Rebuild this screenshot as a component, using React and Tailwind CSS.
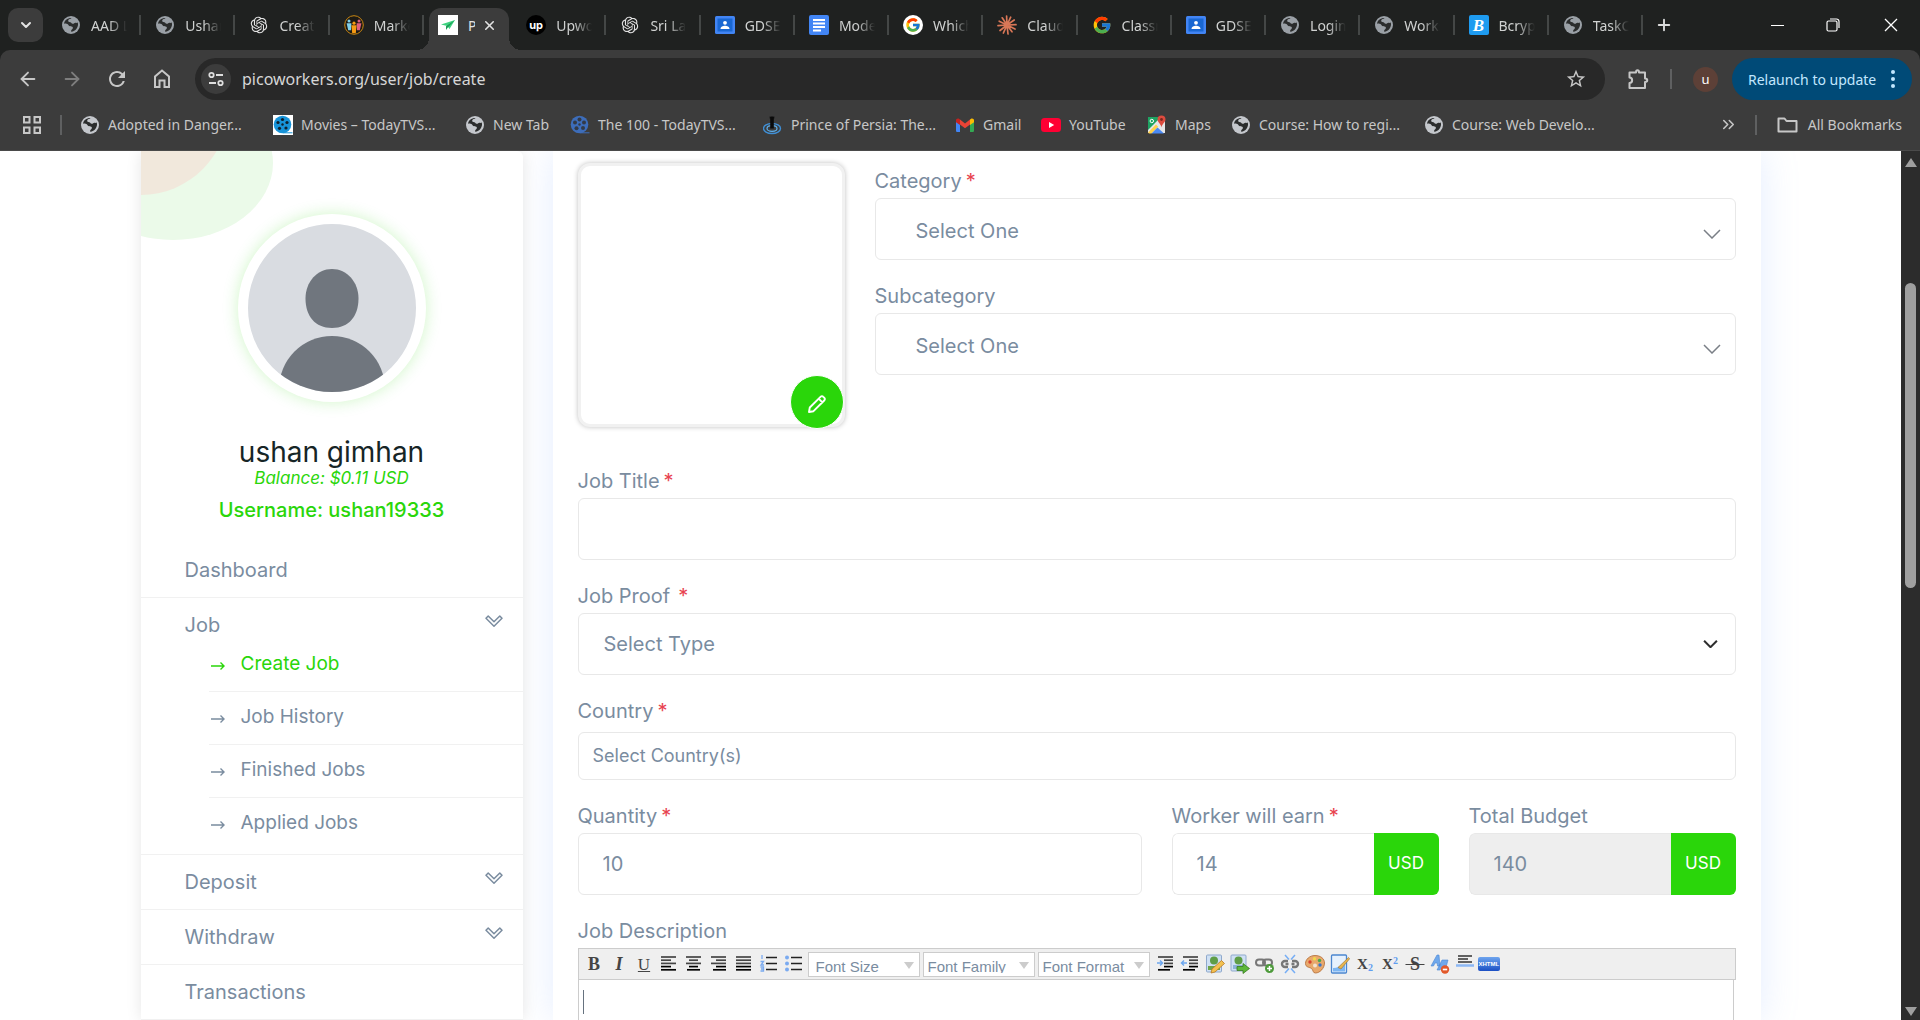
import React from "react";
import { ArrowLeft, ArrowRight, ChevronDown, ChevronsRight, X, Plus } from "lucide-react";
import { FcGoogle } from "react-icons/fc";
import { RiOpenaiFill } from "react-icons/ri";
import { MdStarBorder, MdRefresh } from "react-icons/md";

/* ---------- favicons ---------- */

function Globe({ className = "text-[#9aa0a6]" }) {
  return (
    <svg viewBox="0 0 20 20" className={`size-5 shrink-0 ${className}`} aria-hidden="true">
      <circle cx="10" cy="10" r="9" fill="currentColor" />
      <path
        d="M10.6 3.1c-1.1 1.2-3 .9-3.4 2.400-.3 1.200.9 1.700 2.100 1.700 1.200 0 1 1.400 2.300 1.600 1.500.2 1.800-1.300 3.100-1 .9.2 1.400.1 2.100-.3.6 2.200.1 4.500-1.300 6.200-1.300 1.700-3 2.900-5.300 3-.2-1.100.1-1.900 1-2.500 1-.7.9-1.700.1-2.400-1-.9-2-.4-3-.9-.9-.5-.8-1.500-1.900-1.900-1.200-.4-2.300-.1-3.300-.5C3.300 5.800 6 3.100 10.600 3.100Z"
        fill="#2b2d2d"
      />
    </svg>
  );
}

function People() {
  return (
    <svg viewBox="0 0 20 20" className="size-5 shrink-0" aria-hidden="true">
      <circle cx="10" cy="10" r="9.300" fill="#1d1a14" stroke="#c98712" strokeWidth="1" />
      <circle cx="5" cy="6" r="1.500" fill="#7fd0ea" />
      <path d="M2.600 8.200h4.800l-.4 7H4.200Z" fill="#7fd0ea" />
      <circle cx="15" cy="6" r="1.500" fill="#e0607e" />
      <path d="M12.600 8.200h4.800l-1.600 7H13Z" fill="#e0607e" />
      <circle cx="10" cy="8.200" r="1.600" fill="#f59a13" />
      <path d="M7.400 10.200h5.200l-.8 8H8.200Z" fill="#f59a13" />
    </svg>
  );
}

function Plane() {
  return (
    <svg viewBox="0 0 20 20" className="size-5 shrink-0" aria-hidden="true">
      <rect width="20" height="20" fill="#fff" />
      <path d="M3 9.500 17 5l-5.500 9-2.200-3Z" fill="#3ed27f" />
      <path d="M17 5 8 11.200V15l2-2.800Z" fill="#1a9c56" />
    </svg>
  );
}

function Upwork() {
  return (
    <span className="flex size-5 shrink-0 items-center justify-center rounded-full bg-black font-['Inter'] text-[11px] font-bold leading-none text-white">
      up
    </span>
  );
}

function Classroom() {
  return (
    <svg viewBox="0 0 20 20" className="size-5 shrink-0" aria-hidden="true">
      <rect y="1" width="20" height="18" rx="1.500" fill="#4285f4" />
      <rect x="2.500" y="3.500" width="15" height="13" fill="#1967d2" />
      <circle cx="10" cy="7.800" r="1.900" fill="#fff" />
      <path d="M5.500 14c0-2.400 2.400-3.300 4.500-3.300s4.500.9 4.500 3.300Z" fill="#fff" />
    </svg>
  );
}

function Docs() {
  return (
    <svg viewBox="0 0 20 20" className="size-5 shrink-0" aria-hidden="true">
      <rect width="20" height="20" rx="2" fill="#4285f4" />
      <path d="M4 5h12M4 8.500h12M4 12h12M4 15.500h8" stroke="#fff" strokeWidth="2" />
    </svg>
  );
}

function GoogleCircle() {
  return (
    <span className="flex size-5 shrink-0 items-center justify-center rounded-full bg-white">
      <FcGoogle className="size-4" />
    </span>
  );
}

function Burst() {
  return (
    <svg viewBox="0 0 20 20" className="size-5 shrink-0" aria-hidden="true" stroke="#d97757" strokeWidth="1.700" strokeLinecap="round">
      <path d="M10 10 9.600 1M10 10l3.700-7.800M10 10l7.200-5M10 10l9-.3M10 10l8 4M10 10l5 6.800M10 10l1 9M10 10l-3.600 8M10 10l-7 5.500M10 10l-9 .6M10 10 2.200 6.200M10 10 5.200 2.800" />
    </svg>
  );
}

function Bcrypt() {
  return (
    <span className="flex size-5 shrink-0 items-center justify-center rounded-[2px] bg-[#1e9bf0] font-['Liberation_Serif'] text-[17px] font-bold italic leading-none text-white">
      B
    </span>
  );
}

function Reel({ boxed }) {
  const c = boxed ? "#1793d8" : "#3d6dba";
  const hole = boxed ? "#10202c" : "#333a46";
  return (
    <svg viewBox="0 0 20 20" className="size-5 shrink-0" aria-hidden="true">
      {boxed && <rect width="20" height="20" fill="#fff" />}
      <circle cx="9.500" cy="9.500" r="8.800" fill={c} />
      <path d="M10 17.300h9.500v1H10Z" fill={c} />
      {[
        [9.500, 4.500],
        [14, 7.500],
        [13, 13],
        [6.500, 13.300],
        [5, 7.500],
      ].map(([x, y]) => (
        <circle key={x} cx={x} cy={y} r={boxed ? 1.6 : 2} fill={hole} />
      ))}
      <circle cx="9.500" cy="9.500" r="1.200" fill={hole} />
    </svg>
  );
}

function Tower() {
  return (
    <svg viewBox="0 0 20 20" className="size-5 shrink-0" aria-hidden="true" fill="none">
      <ellipse cx="9" cy="13.500" rx="8.500" ry="5" stroke="#3f8fd6" strokeWidth="1.400" />
      <ellipse cx="9" cy="13.500" rx="5" ry="2.800" stroke="#5fb0ee" strokeWidth="1.200" />
      <path d="M7.200 2v11.500h3.600V2Z" fill="#0a0a0a" />
      <path d="M7.200 1.500v2M9 1v2M10.800 1.500v2" stroke="#0a0a0a" />
    </svg>
  );
}

function Gmail() {
  return (
    <svg viewBox="0 0 20 20" className="size-5 shrink-0" aria-hidden="true">
      <path d="M1 5v10.700c0 .7.6 1.300 1.300 1.300H5V8.500Z" fill="#4285f4" />
      <path d="M19 5v10.700c0 .7-.6 1.300-1.300 1.300H15V8.500Z" fill="#34a853" />
      <path d="M5 4.500 10 8.400l5-3.900v5L10 13.300 5 9.500Z" fill="#ea4335" />
      <path d="M1 5.200v2L5 10V4.500l-.8-.6C2.900 2.900 1 3.700 1 5.200Z" fill="#c5221f" />
      <path d="M19 5.200v2L15 10V4.500l.8-.6c1.300-1 3.200-.2 3.200 1.300Z" fill="#fbbc04" />
    </svg>
  );
}

function YouTube() {
  return (
    <svg viewBox="0 0 20 20" className="size-5 shrink-0" aria-hidden="true">
      <rect y="3" width="20" height="14" rx="3.500" fill="#ff0033" />
      <path d="m8 7 5.200 3L8 13Z" fill="#fff" />
    </svg>
  );
}

function MapsIcon() {
  return (
    <svg viewBox="0 0 20 20" className="size-5 shrink-0" aria-hidden="true">
      <path d="M1 2h13l4 4v12H1Z" fill="#e6e6e6" />
      <path d="M1 2h13L1 15Z" fill="#1ea362" />
      <path d="m1 17.500 8-8 2.200 2.200L4.500 18.500H2Z" fill="#ffd14a" />
      <path d="m4.500 18.500 6-6 6.500 6Z" fill="#4a89f3" />
      <circle cx="4.800" cy="6" r="1.700" fill="none" stroke="#fff" strokeWidth="1" />
      <path d="M14.500.5a4 4 0 0 1 4 4c0 2.700-3.300 4-4 8-.7-4-4-5.300-4-8a4 4 0 0 1 4-4Z" fill="#dd4b3e" />
      <circle cx="14.500" cy="4.500" r="1.400" fill="#7c2720" />
    </svg>
  );
}

const OpenAI = () => <RiOpenaiFill className="size-5 shrink-0 text-[#e3e3e3]" />;
const Google = () => <FcGoogle className="size-5 shrink-0" />;
const BrightGlobe = () => <Globe className="text-[#c4c7cc]" />;

/* ---------- browser chrome ---------- */

const tabs = [
  ["AAD Lab", Globe],
  ["Ushan", Globe],
  ["Create", OpenAI],
  ["Market", People],
  ["Pico", Plane, true],
  ["Upwork", Upwork],
  ["Sri Lanka", OpenAI],
  ["GDSE", Classroom],
  ["Model", Docs],
  ["Which", GoogleCircle],
  ["Claude", Burst],
  ["Classr", Google],
  ["GDSE", Classroom],
  ["Login", Globe],
  ["Works", Globe],
  ["Bcrypt", Bcrypt],
  ["TaskC", Globe],
];

function Tab({ label, Icon, active }) {
  if (active) {
    return (
      <div className="h-full w-0 min-w-0 flex-1 pl-[5px] pr-[3px] pt-2">
        <div className="relative flex h-[42px] items-center rounded-t-xl bg-[#3c3c3c] pb-2 pl-[9px] pr-3">
          <span className="absolute -left-3 bottom-0 size-3 bg-[radial-gradient(circle_at_0_0,transparent_12px,#3c3c3c_12px)]" />
          <span className="absolute -right-3 bottom-0 size-3 bg-[radial-gradient(circle_at_100%_0,transparent_12px,#3c3c3c_12px)]" />
          <Icon />
          <span className="ml-[10px] w-[7px] overflow-hidden text-[#e3e3e3]">{label}</span>
          <button aria-label="Close tab" className="ml-auto text-[#e3e3e3]">
            <X className="size-[15px]" strokeWidth={2.5} />
          </button>
        </div>
      </div>
    );
  }
  return (
    <button className="flex w-0 min-w-0 flex-1 items-center pl-[14px] text-left text-[#d0d2d1]">
      <Icon />
      <span className="ml-[10px] w-9 overflow-hidden whitespace-nowrap [mask-image:linear-gradient(to_right,black_50%,transparent)]">
        {label}
      </span>
      <span className="ml-auto h-5 w-[2px] bg-[#444746]" />
    </button>
  );
}

function TabStrip() {
  return (
    <div className="flex h-[50px] items-center bg-[#1f2120] pl-2 font-['Noto_Sans',sans-serif] text-[14px]">
      <button aria-label="Search tabs" className="flex h-[34px] w-[35px] items-center justify-center rounded-[10px] bg-[#3c3c3c] text-[#e3e3e3]">
        <ChevronDown className="size-4" strokeWidth={3} />
      </button>
      <div className="ml-1 flex h-full max-w-[1596px] flex-1 items-center">
        {tabs.map(([label, Icon, active], i) => (
          <Tab key={i} label={label} Icon={Icon} active={active} />
        ))}
      </div>
      <button aria-label="New tab" className="ml-3 text-[#dcdcdc]">
        <Plus className="size-[18px]" strokeWidth={2.500} />
      </button>
      <div className="ml-auto flex items-center text-white">
        <button aria-label="Minimize" className="flex h-10 w-14 items-center justify-center">
          <span className="h-px w-[13px] bg-white" />
        </button>
        <button aria-label="Restore" className="flex h-10 w-14 items-center justify-center">
          <svg viewBox="0 0 14 14" className="size-[14px]" fill="none" stroke="currentColor" strokeWidth="1.200">
            <rect x="1" y="3" width="10" height="10" rx="1.500" />
            <path d="M4 1h6.500A2.500 2.500 0 0 1 13 3.500V10" />
          </svg>
        </button>
        <button aria-label="Close" className="flex h-10 w-[59px] items-center justify-center">
          <svg viewBox="0 0 14 14" className="size-[14px]" stroke="currentColor" strokeWidth="1.300">
            <path d="m1 1 12 12M13 1 1 13" />
          </svg>
        </button>
      </div>
    </div>
  );
}

function AddressBar() {
  return (
    <div className="flex h-[58px] items-center rounded-t-[10px] bg-[#3c3c3c] pl-[17px] pr-2 text-[#c7c7c7]">
      <button aria-label="Back"><ArrowLeft className="size-[22px]" /></button>
      <button aria-label="Forward" className="ml-[22px] text-[#7e7e7e]"><ArrowRight className="size-[22px]" /></button>
      <button aria-label="Reload" className="ml-[22px]"><MdRefresh className="size-6" /></button>
      <button aria-label="Home" className="ml-[22px]">
        <svg viewBox="0 0 22 22" className="size-[22px]" fill="none" stroke="currentColor" strokeWidth="2">
          <path d="M4 19V8.500l7-6 7 6V19h-4.500v-6.500h-5V19Z" />
        </svg>
      </button>
      <div className="ml-[22px] flex h-[42px] flex-1 items-center rounded-full bg-[#282828] pl-[6px] pr-[18px]">
        <button aria-label="View site information" className="flex size-[30px] items-center justify-center rounded-full bg-[#3c3c3c] text-[#dedede]">
          <svg viewBox="0 0 18 18" className="size-[18px]" fill="none" stroke="currentColor" strokeWidth="1.800">
            <circle cx="4.500" cy="5" r="2.200" />
            <path d="M9 5h7M2 13h7" />
            <circle cx="13.500" cy="13" r="2.200" />
          </svg>
        </button>
        <label htmlFor="url" className="sr-only">Address</label>
        <input
          id="url"
          className="ml-[11px] flex-1 bg-transparent font-['Noto_Sans',sans-serif] text-[16px] leading-6 text-[#d6d6d6] outline-none"
          defaultValue="picoworkers.org/user/job/create"
        />
        <button aria-label="Bookmark this tab"><MdStarBorder className="size-[22px]" /></button>
      </div>
      <button aria-label="Extensions" className="ml-[22px]">
        <svg viewBox="0 0 22 22" className="size-[22px]" fill="none" stroke="currentColor" strokeWidth="2" strokeLinejoin="round">
          <path d="M2.500 4.500H9c0-3 3-3 3 0h6v6c3 0 3 3.500 0 3.500v6H2.500v-5c3.500 0 3.500-5.500 0-5.500Z" />
        </svg>
      </button>
      <span className="ml-[21px] h-5 w-[2px] bg-[#5f6061]" />
      <button aria-label="Profile" className="ml-[21px] flex size-[25px] items-center justify-center rounded-full bg-[#5d4037] font-['Noto_Sans',sans-serif] text-[13px] leading-none text-white">
        u
      </button>
      <button className="ml-[14px] flex h-[42px] w-[180px] items-center justify-between rounded-full bg-[#004a77] pl-4 pr-[17px] font-['Noto_Sans',sans-serif] text-[14px] text-[#c2e7ff]">
        <span className="whitespace-nowrap">Relaunch to update</span>
        <svg viewBox="0 0 4 18" className="h-[18px] w-1" fill="currentColor">
          <circle cx="2" cy="2" r="2" />
          <circle cx="2" cy="9" r="2" />
          <circle cx="2" cy="16" r="2" />
        </svg>
      </button>
    </div>
  );
}

const BoxedReel = () => <Reel boxed />;

const bookmarks = [
  ["Adopted in Danger...", BrightGlobe, "w-[193px]"],
  ["Movies – TodayTVS...", BoxedReel, "w-[192px]"],
  ["New Tab", BrightGlobe, "w-[105px]"],
  ["The 100 - TodayTVS...", Reel, "w-[193px]"],
  ["Prince of Persia: The...", Tower, "w-[192px]"],
  ["Gmail", Gmail, "w-[86px]"],
  ["YouTube", YouTube, "w-[106px]"],
  ["Maps", MapsIcon, "w-[84px]"],
  ["Course: How to regi...", BrightGlobe, "w-[193px]"],
  ["Course: Web Develo...", BrightGlobe, "w-[193px]"],
];

function BookmarksBar() {
  return (
    <nav className="flex h-[43px] items-center border-b border-[#4a4a4a] bg-[#3c3c3c] pb-[9px] pl-[23px] pr-[18px] font-['Noto_Sans',sans-serif] text-[14px] text-[#c7c7c7]">
      <button aria-label="Apps">
        <svg viewBox="0 0 18 18" className="size-[18px]" fill="none" stroke="currentColor" strokeWidth="2">
          <path d="M1 1h5.500v5.500H1ZM11.500 1H17v5.500h-5.500ZM1 11.500h5.500V17H1ZM11.500 11.500H17V17h-5.500Z" />
        </svg>
      </button>
      <span className="ml-[19px] mr-[18px] h-5 w-[2px] bg-[#5f6061]" />
      {bookmarks.map(([label, Icon, width]) => (
        <a key={label} href="#" className={`flex items-center gap-2 whitespace-nowrap ${width}`}>
          <Icon />
          {label}
        </a>
      ))}
      <button aria-label="More bookmarks" className="ml-auto"><ChevronsRight className="size-[19px]" /></button>
      <span className="ml-[17px] mr-5 h-5 w-[2px] bg-[#5f6061]" />
      <button className="flex items-center gap-[10px] whitespace-nowrap">
        <svg viewBox="0 0 21 18" className="h-[18px] w-[21px]" fill="none" stroke="currentColor" strokeWidth="2" strokeLinejoin="round">
          <path d="M1.500 2.500h6l2 2.500h10v10.500h-18Z" />
        </svg>
        All Bookmarks
      </button>
    </nav>
  );
}

/* ---------- sidebar ---------- */

function OutlineChevron() {
  return (
    <svg viewBox="0 0 18 12" className="mb-2 h-3 w-[18px]" fill="none" stroke="currentColor" strokeWidth="1.500" strokeLinejoin="round" aria-hidden="true">
      <path d="M9 11.200 1 3.200 3.200 1 9 6.800 14.800 1 17 3.200Z" />
    </svg>
  );
}

function SmallArrow() {
  return (
    <svg viewBox="0 0 14 10" className="mt-[3px] h-[10px] w-[14px]" fill="none" stroke="currentColor" strokeWidth="1.400" aria-hidden="true">
      <path d="M0 5h13M9.500 1.500 13 5 9.500 8.500" />
    </svg>
  );
}

function MenuRow({ label, expandable }) {
  return (
    <li className="border-b border-[#f1f1f1]">
      <a href="#" className="flex h-[54px] items-center justify-between pl-11 pr-5">
        {label}
        {expandable && <OutlineChevron />}
      </a>
    </li>
  );
}

const jobLinks = ["Create Job", "Job History", "Finished Jobs", "Applied Jobs"];

function Sidebar() {
  return (
    <aside className="relative w-[382px] shrink-0 self-stretch rounded-t-md bg-white shadow-[0_0_16px_rgba(0,0,0,0.1)]">
      <svg viewBox="0 0 140 90" className="absolute left-0 top-0 h-[90px] w-[140px]" aria-hidden="true">
        <ellipse cx="32" cy="12" rx="100" ry="77" fill="#ebfae9" />
        <ellipse cx="0" cy="-46" rx="88" ry="90" fill="#f1e8dc" />
      </svg>
      <div className="relative flex flex-col items-center pt-[63px]">
        <div className="size-[188px] overflow-hidden rounded-full border-[10px] border-white bg-[#d9dce1] shadow-[0_0_16px_rgba(42,214,10,0.22)]">
          <svg viewBox="0 0 168 168" className="size-full" fill="#70767e" role="img" aria-label="Profile picture">
            <path d="M84 45c15 0 26.500 13 26.500 29.500C110.500 92 101 104 84 104s-26.500-12-26.500-29.500C57.500 58 69 45 84 45Z" />
            <circle cx="84" cy="165" r="53" />
          </svg>
        </div>
        <h5 className="mt-8 font-['Inter',sans-serif] text-[28px] leading-9 text-[#162526]">ushan gimhan</h5>
        <span className="font-['Inter',sans-serif] text-[17px] italic leading-4 text-[#2ad60a]">Balance: $0.11 USD</span>
        <h6 className="mt-2 font-['Inter',sans-serif] text-[20px] font-medium leading-8 text-[#2ad60a]">Username: ushan19333</h6>
      </div>
      <ul className="mt-[17px] text-[20px]">
        <MenuRow label="Dashboard" />
        <li className="border-b border-[#f1f1f1] pb-1">
          <a href="#" className="flex h-[41px] items-center justify-between pl-11 pr-5 pt-[13px] leading-7">
            Job
            <OutlineChevron />
          </a>
          <ul className="ml-[68px] divide-y divide-[#f1f1f1] text-[19px]">
            {jobLinks.map((label, i) => (
              <li key={label}>
                <a href="#" className={`flex h-[52px] items-center gap-4 pb-px pl-[2px] ${i === 0 ? "text-[#2ad60a]" : ""}`}>
                  <SmallArrow />
                  {label}
                </a>
              </li>
            ))}
          </ul>
        </li>
        <MenuRow label="Deposit" expandable />
        <MenuRow label="Withdraw" expandable />
        <MenuRow label="Transactions" />
      </ul>
    </aside>
  );
}

/* ---------- job form ---------- */

function FieldLabel({ htmlFor, children, required, spaced }) {
  return (
    <label htmlFor={htmlFor} className="mb-[2px] block text-[20px] leading-[30px]">
      {children}
      {required && <span className={`text-[#e8434f] ${spaced ? "ml-2" : "ml-1"}`}>*</span>}
    </label>
  );
}

const box = "block h-[62px] w-full appearance-none rounded-md border border-[#e8e8e8] bg-white text-[20px] text-[#7a8c9f] outline-none";

function SelectField({ id, label, option, thin, required, spaced }) {
  return (
    <div>
      <FieldLabel htmlFor={id} required={required} spaced={spaced}>{label}</FieldLabel>
      <div className="relative">
        <select id={id} className={`${box} ${thin ? "pl-10 pt-1" : "pl-[25px]"}`}>
          <option>{option}</option>
        </select>
        <svg
          viewBox="0 0 18 10"
          className={`pointer-events-none absolute top-1/2 ${thin ? "right-[15px] h-[10px] w-[18px]" : "right-[18px] h-2 w-[15px] -translate-y-1"}`}
          fill="none"
          stroke={thin ? "#7a7f86" : "#2d2d2d"}
          strokeWidth={thin ? 1.5 : 2.5}
          aria-hidden="true"
        >
          <path d="m1 1 8 8 8-8" />
        </svg>
      </div>
    </div>
  );
}

function MoneyField({ id, label, value, required, disabled }) {
  return (
    <div className="min-w-0">
      <FieldLabel htmlFor={id} required={required}>{label}</FieldLabel>
      <div className="flex h-[62px] overflow-hidden rounded-md">
        <input
          id={id}
          defaultValue={value}
          readOnly={disabled}
          className={`min-w-0 flex-1 rounded-l-md border border-r-0 border-[#e8e8e8] pl-6 text-[20px] outline-none ${disabled ? "bg-[#eeeeee]" : "bg-white"}`}
        />
        <span className="flex w-[65px] items-center justify-center bg-[#2ad60a] text-[17px] text-white">USD</span>
      </div>
    </div>
  );
}

/* ---------- rich text toolbar ---------- */

function Lines({ rows, children }) {
  return (
    <>
      {rows.map(([a, b], i) => (
        <path key={i} d={`M${a} ${3 + i * 3.2}H${b}`} stroke={i > 2 ? "#000" : "#444"} strokeWidth="1.700" />
      ))}
      {children}
    </>
  );
}

const leftTools = [
  ["Bold", <b className="font-['Liberation_Serif'] text-[18px] leading-none text-[#444]">B</b>],
  ["Italic", <i className="font-['Liberation_Serif'] text-[18px] font-bold leading-none text-[#444]">I</i>],
  ["Underline", <span className="font-['Liberation_Serif'] text-[17px] leading-none text-[#444] underline">U</span>],
  ["Left Align", <Lines rows={[[2, 17], [2, 12], [2, 17], [2, 12], [2, 17]]} />],
  ["Center Align", <Lines rows={[[2, 17], [5, 14], [2, 17], [5, 14], [3, 16]]} />],
  ["Right Align", <Lines rows={[[2, 17], [7, 17], [2, 17], [7, 17], [4, 17]]} />],
  ["Justify Align", <Lines rows={[[2, 17], [2, 17], [2, 17], [2, 17], [2, 17]]} />],
  [
    "Ordered List",
    <>
      <path d="M7 3.500h11M7 9.500h11M7 15.500h11" stroke="#222" strokeWidth="1.500" />
      <path d="M3 1v4M1.500 7.500h3L2 11h3M1.500 13h3v4h-3M2 15h2.500" stroke="#7aaaf0" strokeWidth="1.300" fill="none" />
    </>,
  ],
  [
    "Unordered List",
    <>
      <path d="M7 3.500h11M7 9.500h11M7 15.500h11" stroke="#222" strokeWidth="1.500" />
      <g fill="#7aaaf0">
        <circle cx="3" cy="3.500" r="2" />
        <circle cx="3" cy="9.500" r="2" />
        <circle cx="3" cy="15.500" r="2" />
      </g>
    </>,
  ],
];

const rightTools = [
  [
    "Indent",
    <Lines rows={[[3, 18], [9, 18], [9, 18], [9, 18], [3, 15]]}>
      <path d="M2 9h5M5 6.500 7.500 9 5 11.500" stroke="#6da7ee" strokeWidth="1.500" fill="none" />
    </Lines>,
  ],
  [
    "Remove Indent",
    <Lines rows={[[3, 18], [9, 18], [9, 18], [9, 18], [3, 15]]}>
      <path d="M2 9h5M4 6.500 1.500 9 4 11.500" stroke="#6da7ee" strokeWidth="1.500" fill="none" />
    </Lines>,
  ],
  [
    "Add Image",
    <>
      <rect x="1.500" y="1" width="15" height="17" rx="1" fill="#cfe0f4" stroke="#8fa9cc" />
      <path d="M3 12h12v4H3Z" fill="#6fa54a" />
      <circle cx="9" cy="6.500" r="4" fill="#5f9e47" />
      <path d="m6 19 1-4 9.500-8.500 3 3L10 18Z" fill="#f4c14f" stroke="#b77a25" strokeWidth=".8" />
    </>,
  ],
  [
    "Upload Image",
    <>
      <rect x="1" y="1" width="15" height="16" rx="1" fill="#cfe0f4" stroke="#8fa9cc" />
      <path d="M3 11h11v4H3Z" fill="#8db4d8" />
      <circle cx="8.500" cy="6.500" r="4" fill="#5f9e47" />
      <path d="M7 12.500h6V9.500l6.500 5-6.500 5v-3H7Z" fill="#5db83a" stroke="#377a20" strokeWidth=".8" />
    </>,
  ],
  [
    "Add Link",
    <>
      <g fill="none" stroke="#777" strokeWidth="2">
        <rect x="1" y="5.500" width="9" height="6" rx="3" />
        <rect x="8" y="5.500" width="9" height="6" rx="3" />
      </g>
      <circle cx="14.500" cy="14.500" r="4.500" fill="#4d9a3b" />
      <path d="M14.500 12v5M12 14.500h5" stroke="#fff" strokeWidth="1.500" />
    </>,
  ],
  [
    "Remove Link",
    <>
      <g fill="none" stroke="#777" strokeWidth="2.400">
        <path d="M8 7H5a3 3 0 0 0 0 6h3M12 7h3a3 3 0 0 1 0 6h-3M5.500 10h3M11.500 10h3" />
      </g>
      <path d="m5 1 4 4.500M15 1l-4 4.500M5 19l4-4.500M15 19l-4-4.500" stroke="#76aef5" strokeWidth="1.500" />
    </>,
  ],
  [
    "Change Color",
    <>
      <path d="M10 1.500c5.500 0 9.500 3 9.500 7.500 0 5-4.500 10-9 10-3 0-2-3-4-4.500S.5 13.500.5 9.500 4.500 1.500 10 1.500Z" fill="#e8a96c" stroke="#b06a34" strokeWidth=".8" />
      <circle cx="5" cy="8" r="1.700" fill="#d9432f" />
      <circle cx="9.500" cy="4.800" r="1.700" fill="#f1d84a" />
      <circle cx="14.500" cy="6.500" r="1.700" fill="#4da84b" />
      <circle cx="15" cy="11" r="1.700" fill="#3b74c9" />
      <circle cx="10" cy="11.500" r="2" fill="#f4e2cf" />
    </>,
  ],
  [
    "Background Color",
    <>
      <rect x="1.500" y="1" width="15" height="18" rx="1" fill="#e6f1fd" stroke="#4b86cf" strokeWidth="1.300" />
      <path d="M3 17.500V14c4 0 8-2 12-6v9.500Z" fill="#7cb6f3" />
      <path d="m8 13.500 10.500-10 1.200 1.200L11 15Z" fill="#e7b54d" stroke="#9b7130" strokeWidth=".6" />
    </>,
  ],
  ["Subscript", <span className="font-['Liberation_Serif'] text-[15px] font-bold leading-none text-[#444]">X<sub className="text-[10px] text-[#5f9ef0]">2</sub></span>],
  ["Superscript", <span className="font-['Liberation_Serif'] text-[15px] font-bold leading-none text-[#444]">X<sup className="text-[10px] text-[#5f9ef0]">2</sup></span>],
  ["Strike Through", <span className="font-['Liberation_Serif'] text-[18px] font-bold leading-none text-[#444] line-through">&nbsp;S&nbsp;</span>],
  [
    "Remove Formatting",
    <>
      <path d="m1 12 6-11h2l1 11H7.500l-.3-3H5l-1.500 3ZM7 16l5-10h6l-3 11h-3l1-4h-1.500L10 16Z" fill="#6fa8ec" stroke="#4a86d4" strokeWidth=".6" />
      <circle cx="15" cy="15.500" r="4.200" fill="#e2592b" />
      <path d="M12.800 15.500h4.400" stroke="#fff" strokeWidth="1.700" />
    </>,
  ],
  [
    "Horizontal Rule",
    <>
      <path d="M3 2h14M3 5h10M3 8h14" stroke="#333" strokeWidth="1.500" />
      <path d="M1 11.500h18" stroke="#8db8f5" strokeWidth="2.500" />
    </>,
  ],
];

function Tool({ name, children }) {
  const isText = children.type === "b" || children.type === "i" || children.type === "span";
  return (
    <button type="button" aria-label={name} className="flex h-6 w-[25px] shrink-0 items-center justify-center whitespace-nowrap">
      {isText ? children : <svg viewBox="0 0 20 20" className="size-5">{children}</svg>}
    </button>
  );
}

function ToolSelect({ label, wide }) {
  return (
    <div className="relative mr-[3px] h-[25px] w-28 shrink-0 border border-[#ccc] bg-white">
      <div className="h-5 overflow-hidden">
        <select aria-label={label} className={`h-[30px] w-full appearance-none bg-transparent font-['Liberation_Sans',sans-serif] text-[15px] outline-none ${wide ? "pl-[7px]" : "pl-1"}`}>
          <option>{label}</option>
        </select>
      </div>
      <span className="pointer-events-none absolute right-[5px] top-[9px] border-x-[5px] border-t-[7px] border-x-transparent border-t-[#ccc]" />
    </div>
  );
}

function Editor() {
  return (
    <div className="flex flex-1 flex-col">
      <FieldLabel htmlFor="description">Job Description</FieldLabel>
      <div className="flex h-8 items-center overflow-hidden border border-[#ccc] bg-[#efefef] pl-[3px]">
        {leftTools.map(([name, art]) => (
          <Tool key={name} name={name}>{art}</Tool>
        ))}
        <span className="w-px" />
        <ToolSelect label="Font Size" wide />
        <ToolSelect label="Font Family" />
        <ToolSelect label="Font Format" />
        {rightTools.map(([name, art]) => (
          <Tool key={name} name={name}>{art}</Tool>
        ))}
        <button type="button" className="h-[14px] rounded-[2px] bg-gradient-to-b from-[#6ea4ee] to-[#1c4fc4] px-px font-['Liberation_Sans'] text-[6px] font-bold leading-[14px] text-white">
          XHTML
        </button>
      </div>
      <div className="relative mr-[2px] min-h-[60px] flex-1 border-x border-[#ccc]">
        <textarea id="description" className="block size-full resize-none px-1 py-2 outline-none" />
        <span className="absolute left-1 top-[10px] h-6 w-px bg-[#66727f]" />
      </div>
    </div>
  );
}

function JobForm() {
  return (
    <form className="flex min-w-0 flex-1 flex-col bg-white px-[25px] pt-3 shadow-[0_0_35px_rgba(130,175,255,0.22)]">
      <div className="mb-[39px] grid grid-cols-4 gap-[30px]">
        <div className="relative h-[264px] rounded-xl border-[3px] border-[#f1f1f1] bg-white shadow-[0_0_5px_rgba(0,0,0,0.25)]">
          <button type="button" aria-label="Upload image" className="absolute -bottom-[5px] -right-[2px] flex size-[54px] items-center justify-center rounded-full border border-white bg-[#2ad60a] text-white">
            <svg viewBox="0 0 20 20" className="mt-1 size-5" fill="none" stroke="currentColor" strokeWidth="1.900" strokeLinejoin="round">
              <path d="m2 18 .8-4.500L13.500 2.800c.9-.9 2-.9 2.800 0l.9.9c.8.8.8 1.900 0 2.800L6.500 17.200ZM11.700 4.600l3.700 3.700" />
            </svg>
          </button>
        </div>
        <div className="col-span-3 flex flex-col gap-[21px] pt-[3px]">
          <SelectField id="category" label="Category" option="Select One" thin required />
          <SelectField id="subcategory" label="Subcategory" option="Select One" thin />
        </div>
      </div>
      <div className="flex flex-1 flex-col gap-[21px]">
        <div>
          <FieldLabel htmlFor="title" required>Job Title</FieldLabel>
          <input id="title" className={`${box} px-6`} />
        </div>
        <SelectField id="proof" label="Job Proof" option="Select Type" required spaced />
        <div>
          <FieldLabel htmlFor="country" required>Country</FieldLabel>
          <input
            id="country"
            placeholder="Select Country(s)"
            className="mt-[6px] block h-12 w-full rounded-md border border-[#e8e8e8] px-[14px] pb-[2px] text-[18px] outline-none placeholder:text-[#7a8c9f]"
          />
        </div>
        <div className="grid grid-cols-4 gap-[30px]">
          <div className="col-span-2">
            <FieldLabel htmlFor="quantity" required>Quantity</FieldLabel>
            <input id="quantity" defaultValue="10" className={`${box} px-6`} />
          </div>
          <MoneyField id="earn" label="Worker will earn" value="14" required />
          <MoneyField id="budget" label="Total Budget" value="140" disabled />
        </div>
        <Editor />
      </div>
    </form>
  );
}

function Scrollbar() {
  return (
    <div className="flex w-[19px] shrink-0 flex-col items-center bg-[#2c2c2c] pb-1 pt-[7px]" aria-hidden="true">
      <span className="border-x-[6px] border-b-[9px] border-x-transparent border-b-[#9f9f9f]" />
      <span className="grow-[115]" />
      <span className="w-[11px] grow-[304] rounded-full bg-[#9f9f9f]" />
      <span className="grow-[417]" />
      <span className="border-x-[6px] border-t-[9px] border-x-transparent border-t-[#9f9f9f]" />
    </div>
  );
}

export default function App() {
  return (
    <div className="flex h-screen flex-col overflow-hidden bg-[#1f2120]">
      <header>
        <TabStrip />
        <AddressBar />
        <BookmarksBar />
      </header>
      <div className="flex min-h-0 flex-1 bg-white font-['Inter',sans-serif] text-[#7a8c9f]">
        <main className="min-w-0 flex-1 overflow-hidden">
          <div className="mx-auto flex h-full max-w-[1620px] gap-[30px]">
            <Sidebar />
            <JobForm />
          </div>
        </main>
        <Scrollbar />
      </div>
    </div>
  );
}
